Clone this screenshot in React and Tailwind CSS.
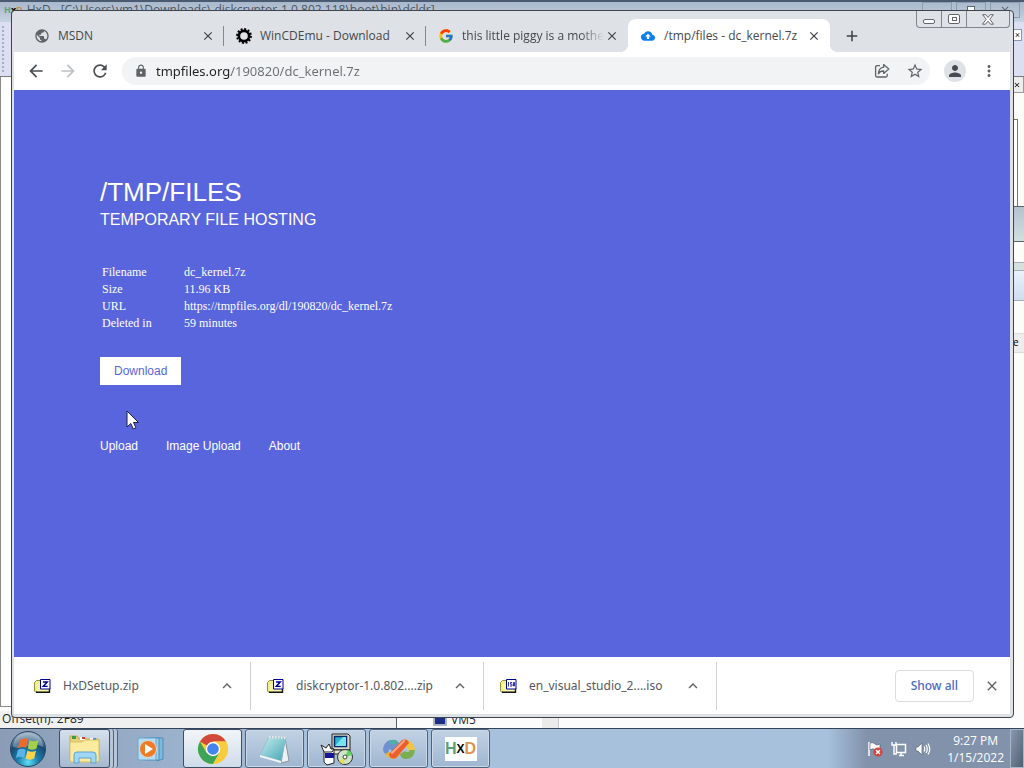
import React from "react";
import { FcGoogle } from "react-icons/fc";
import {
  MdAdd,
  MdArrowBack,
  MdArrowForward,
  MdClose,
  MdCloudUpload,
  MdKeyboardArrowUp,
  MdLock,
  MdMoreVert,
  MdPerson,
  MdPublic,
  MdRefresh,
  MdStarBorder,
} from "react-icons/md";

const GearIcon = () => (
  <svg viewBox="0 0 18 18" className="size-4 shrink-0" fill="none" stroke="#000">
    <circle cx="9" cy="9" r="5.8" strokeWidth="3" />
    <circle cx="9" cy="9" r="7.6" strokeWidth="2.6" strokeDasharray="2.2 1.78" />
  </svg>
);

const ShareIcon = () => (
  <svg viewBox="0 0 16 16" className="size-4" fill="none" stroke="#5f6368" strokeWidth="1.3" strokeLinejoin="round">
    <path d="M6 2.6H3.2Q1.6 2.6 1.6 4.2v8.2Q1.6 14 3.2 14h8.4q1.6 0 1.6-1.6v-1.6" />
    <path d="M9.6 1.6 14.8 6l-5.2 4.4V8Q6.2 7.8 4.4 10.8 4.8 4.8 9.6 4.2z" />
  </svg>
);

const ArchiveIcon = ({ mark }) => (
  <svg viewBox="0 0 17 16" className="w-[17px] h-4 shrink-0">
    <path d="M.5 4.5 2.5 2.500h4l1 1.500v10H1.500l-1-1z" fill="#f1f08a" stroke="#8f8f3c" />
    <path d="M3 6h12v8H3z" fill="#f6f6a8" />
    <path d="M2 14.3h13.500V10" fill="none" stroke="#111" strokeWidth="1.4" />
    <path d="M6.5 1.500h9.500v9.500H6.500z" fill="#fff" stroke="#000091" />
    {mark === "z" ? (
      <path d="M9 4h4.300L9.200 8.400h4.500" fill="none" stroke="#000091" strokeWidth="1.4" />
    ) : (
      <path d="M8.500 4v4.500M12.200 4.500h-1.700v1.700h1.500v1.800H10M13.500 4.500h1v3.500h-1z" fill="none" stroke="#000091" strokeWidth=".8" />
    )}
  </svg>
);

const Orb = () => (
  <svg viewBox="0 0 38 38" className="size-[38px]">
    <defs>
      <radialGradient id="orb" cx="50%" cy="88%" r="85%">
        <stop offset="0" stopColor="#5fe0f4" />
        <stop offset=".35" stopColor="#1b7fae" />
        <stop offset=".7" stopColor="#174a73" />
        <stop offset="1" stopColor="#8fa9bf" />
      </radialGradient>
    </defs>
    <circle cx="19" cy="19" r="17.5" fill="url(#orb)" stroke="#2c4661" />
    <path d="M4 17Q5 3 19 3t15 14q-7-4-15-1T4 17z" fill="#fff" opacity=".3" />
    <path d="M11 10q4-3 8-.5L17 18q-3.500-2-8 .3z" fill="#ee6a2c" />
    <path d="M20.500 10q4.500 2.500 9 0L27.500 18.500q-4.500 2.500-8.700 0z" fill="#a4cf4b" />
    <path d="M8.800 20q4.500-2.500 8 0L15 28q-3.500-2.300-8 0z" fill="#5cb3e8" />
    <path d="M18.500 20.500q4.500 2.500 8.600 0l-2 8q-4.300 2.300-8.500 0z" fill="#fbd34a" />
  </svg>
);

const FolderIcon = () => (
  <svg viewBox="0 0 34 32" className="w-[34px] h-8">
    <path d="M2 3h7l2 3h18q2 0 2 2v18H2z" fill="#e9cf78" stroke="#c6a64c" />
    <path d="M4 3h4v3H4z" fill="#3c9c3f" />
    <path d="M12 4h5v3h-5z" fill="#fff" />
    <path d="M14 4h3v2h-3z" fill="#d0422c" />
    <path d="M22 5h6v3h-6z" fill="#fff" />
    <path d="M25 5h3v2h-3z" fill="#3f8fd0" />
    <path d="M2 9h12l2-2h15v20q0 2-2 2H4q-2 0-2-2z" fill="#fbeb9f" stroke="#d8bf66" />
    <path d="M6 30V22q0-3 3-3h16q3 0 3 3v8h-5v-5H11v5z" fill="#9fd6f3" stroke="#5aa5d6" />
  </svg>
);

const MediaIcon = () => (
  <svg viewBox="0 0 28 26" className="w-7 h-[26px]">
    <path d="M12 2h14v21l-6 2z" fill="#7cb9dd" stroke="#4c8fb8" />
    <path d="M8 2h14v22H8z" fill="#9fd0ec" stroke="#4c8fb8" />
    <path d="M1 2h18v22H1z" fill="#b4dcf2" stroke="#6ba6ca" />
    <circle cx="11" cy="13" r="8.5" fill="#ee7b26" stroke="#d9d9d9" />
    <path d="M8 8v10l8-5z" fill="#fff" />
  </svg>
);

const ChromeIcon = () => (
  <svg viewBox="0 0 32 32" className="size-8">
    <circle cx="16" cy="16" r="15" fill="#f9cc3d" />
    <path d="M16 16 3 8.500A15 15 0 0 1 29 8.500H16z" fill="#d2483a" />
    <path d="M3 8.500A15 15 0 0 0 16 31l6.500-11.200-13 0z" fill="#3ba457" />
    <path d="M16 8.500h13A15 15 0 0 1 16 31l6.500-11.200z" fill="#f9cc3d" />
    <circle cx="16" cy="16" r="7.2" fill="#fff" />
    <circle cx="16" cy="16" r="5.8" fill="#4384ee" />
  </svg>
);

const NotepadIcon = () => (
  <svg viewBox="0 0 32 30" className="w-8 h-[30px]">
    <defs>
      <linearGradient id="pad" x1="0" y1="0" x2="1" y2="1">
        <stop offset="0" stopColor="#c9eef0" />
        <stop offset="1" stopColor="#43a5b4" />
      </linearGradient>
    </defs>
    <path d="m26 4 4 23-8 2z" fill="#eef1f3" stroke="#8794a0" />
    <path d="M10 3 27 4 22 27 1 21z" fill="url(#pad)" stroke="#8fb6bf" strokeWidth=".6" />
    <path d="m1 21 21 6v2L1 23z" fill="#f3f7f8" />
    <path d="m10 3 17 1" stroke="#e9e9e9" strokeWidth="2.5" strokeDasharray="1.5 1.5" />
  </svg>
);

const SetupIcon = () => (
  <svg viewBox="0 0 34 34" className="size-[34px]">
    <path d="M12 2h16l2 2v14H12z" fill="#d7d7cd" stroke="#222" />
    <path d="M14.500 4.500h12v10h-12z" fill="#2bb5d1" stroke="#062a66" strokeWidth="1.5" />
    <path d="m15 14 8-9h3v9z" fill="#7ce3ec" />
    <path d="M11 18h19v4H11z" fill="#e6e6dc" stroke="#222" />
    <path d="M4 17h10v14l-7 2-3-3z" fill="#fff" stroke="#222" />
    <path d="M5 21h9v5H5z" fill="#15159c" />
    <path d="m1 13 5 3 3-4 2 5h3l-2 3H4z" fill="#fff" stroke="#222" />
    <circle cx="25" cy="25" r="7.5" fill="#cfe3c7" stroke="#333" />
    <path d="m25 25 3-7q4 2 4 5z" fill="#5fd35c" />
    <path d="m25 25-6 4q2 3 5 3z" fill="#e5df5b" />
    <circle cx="25" cy="25" r="2" fill="#fff" stroke="#444" />
  </svg>
);

const ToolsIcon = () => (
  <svg viewBox="0 0 34 24" className="w-[34px] h-6">
    <path d="M1 12q1-7 7-9h6l5 5-7 7-5-3-1 7q-5-3-5-7z" fill="#6f90cf" />
    <path d="M7 4q5-3 9 1l-3 3q-3-2-6 0z" fill="#4fb0a8" />
    <path d="M3 17q3 5 10 5l6-5-4-4q-4 5-8 2z" fill="#e6b53a" />
    <path d="M20 4q8-3 12 5l1 4-6 2q-1-6-7-5z" fill="#efc544" />
    <path d="M18 17l5-3q3 3 5-1l5 0q-1 9-9 9-5 0-6-5z" fill="#7bae50" />
    <path d="m7 17 13-14q6-2 7 3L14 21q-6 2-7-4z" fill="#ec5f2c" />
    <path d="M10 16 22 4" stroke="#f9a884" strokeWidth="2" strokeLinecap="round" />
  </svg>
);

const HxdIcon = () => (
  <span className="flex h-6 w-8 items-center justify-center bg-white font-['Liberation_Sans'] text-base font-bold leading-6">
    <span className="text-[#5ba176]">H</span>
    <span className="text-xs leading-6 text-black">X</span>
    <span className="text-[#dc9350]">D</span>
  </span>
);

const tabs = [
  { title: "MSDN", icon: <MdPublic className="size-4 shrink-0 text-[#5f6368]" /> },
  { title: "WinCDEmu - Download", icon: <GearIcon /> },
  { title: "this little piggy is a mothe", icon: <FcGoogle className="size-4 shrink-0" />, fade: true },
  { title: "/tmp/files - dc_kernel.7z", icon: <MdCloudUpload className="size-[14px] mx-px shrink-0 text-[#0a7fe8]" />, active: true },
];

const downloads = [
  { name: "HxDSetup.zip", mark: "z" },
  { name: "diskcryptor-1.0.802....zip", mark: "z" },
  { name: "en_visual_studio_2....iso", mark: "iso" },
];

const details = [
  ["Filename", "dc_kernel.7z"],
  ["Size", "11.96 KB"],
  ["URL", "https://tmpfiles.org/dl/190820/dc_kernel.7z"],
  ["Deleted in", "59 minutes"],
];

const taskButtons = [
  { label: "Notepad", icon: <NotepadIcon /> },
  { label: "Setup", icon: <SetupIcon /> },
  { label: "Tools", icon: <ToolsIcon /> },
  { label: "HxD", icon: <HxdIcon /> },
];

const EditorWindow = () => (
  <div className="absolute inset-0 flex flex-col bg-[#fcfcfd]">
    <div className="flex h-[22px] items-start justify-between border-t-2 border-[#4a5a70] bg-linear-to-b from-[#a9b8cb] to-[#c5d3e2] pr-1">
      <div className="flex items-center gap-1 pl-1 text-xs leading-4 text-[#4c5563]">
        <span className="text-[9px] font-bold text-[#c98a3c]"><span className="text-[#5ba176]">H</span><span className="text-black">x</span>D</span>
        HxD - [C:\Users\vm1\Downloads\ diskcryptor-1.0.802.118\boot\bin\dcldr]
      </div>
      <div className="flex gap-1">
        <button aria-label="Minimize editor" className="h-4 w-[30px] border border-[#8e9cb2]" />
        <button aria-label="Restore editor" className="flex h-4 w-[30px] items-center justify-center border border-[#8e9cb2]">
          <span className="size-2 border border-[#59657a] bg-white" />
        </button>
        <button aria-label="Close editor" className="flex h-4 w-[30px] items-center justify-center border border-[#8e9cb2]">
          <MdClose className="size-3 text-[#59657a]" />
        </button>
      </div>
    </div>
    <div className="flex h-[54px] justify-between bg-[#dcdff1] px-[2px]">
      <div className="my-1 border-l-2 border-dotted border-[#a7adc4]" />
      <div className="mt-[7px] flex h-3 w-2 items-center border-y border-r border-[#8b96b0] bg-white"><MdClose className="size-2" /></div>
    </div>
    <div className="flex min-h-0 flex-1 justify-between border-t border-[#777]">
      <div className="mb-1 w-3 border-b border-l border-[#8a8a8a] bg-white" />
      <div className="flex w-[11px] flex-col bg-[#fdfcfa]">
        <div className="flex h-4 items-center border-b border-r border-[#9a9a9a] bg-[#ededed]"><MdClose className="size-2" /></div>
        <div className="mt-[26px] mr-[6px] h-[87px] border-r border-t border-[#77775f] bg-white" />
        <div className="h-9 border-y border-[#58666b] bg-linear-to-b from-[#b4c2ce] to-[#d2dfdf]" />
        <div className="h-5" />
        <div className="h-[9px] border-y border-[#a3afb4] bg-[#d6e0df]" />
        <div className="h-[30px] border-b border-[#a3afb4] bg-linear-to-b from-[#e9f3fc] to-[#d0dcf0]" />
        <div className="mt-8 h-5 border-y border-[#ddd] bg-[#eeeced] text-[10px] leading-4">e</div>
      </div>
    </div>
    <div className="flex h-[17px] text-xs leading-4 text-[#222]">
      <div className="flex w-[396px] bg-[#f0f0f0] pl-[2px]">Offset(h): 2F89</div>
      <div className="flex flex-1 items-center gap-1 border-l border-[#59606b] pl-9">
        <span className="h-3 w-[14px] border-2 border-[#aab4c2] bg-[#1c2d86]" />
        <span>VM5</span>
        <span className="ml-[62px] h-4 w-[17px] border-r border-[#c8ccd0] bg-[#ebebeb]" />
      </div>
    </div>
  </div>
);

const TabStrip = () => (
  <div className="relative flex h-[41px] items-end bg-[#dee1e6] pl-2">
    {tabs.map((tab, i) => (
      <div
        key={tab.title}
        className={
          tab.active
            ? "relative flex h-[33px] w-[202px] items-center gap-2 rounded-t-lg bg-white pr-2 pl-3 before:absolute before:bottom-0 before:-left-2 before:size-2 before:bg-[radial-gradient(circle_at_0_0,#dee1e6_8px,white_8px)] after:absolute after:bottom-0 after:-right-2 after:size-2 after:bg-[radial-gradient(circle_at_100%_0,#dee1e6_8px,white_8px)]"
            : "relative flex h-[33px] w-[202px] items-center gap-2 pr-2 pl-3"
        }
      >
        {tab.icon}
        <a
          href="#"
          className={
            tab.fade
              ? "min-w-0 flex-1 whitespace-nowrap text-xs leading-4 text-[#45494d] mask-[linear-gradient(90deg,black_84%,transparent)]"
              : "min-w-0 flex-1 whitespace-nowrap text-xs leading-4 text-[#45494d]"
          }
        >
          {tab.title}
        </a>
        <button aria-label={`Close ${tab.title}`} className="-ml-2 flex size-4 shrink-0 items-center justify-center">
          <MdClose className="size-[14px] stroke-[#3c4043] text-[#3c4043]" />
        </button>
        {i < 2 && <span className="absolute right-0 h-5 w-px bg-[#85888d]" />}
      </div>
    ))}
    <button aria-label="New tab" className="mb-[6px] ml-3 flex size-5 items-center justify-center">
      <MdAdd className="size-[18px] stroke-[#3c4043] text-[#3c4043]" />
    </button>
    <div className="absolute top-0 right-0 flex h-[17px] rounded-b-[4px] border border-t-0 border-[#80848b]">
      <button aria-label="Minimize" className="flex w-[25px] items-center justify-center border-r border-[#80848b]">
        <span className="mt-1 h-[5px] w-3 rounded-[2px] border border-[#62666c] bg-white" />
      </button>
      <button aria-label="Maximize" className="flex w-[25px] items-center justify-center border-r border-[#80848b]">
        <span className="flex h-[10px] w-3 items-center justify-center rounded-[2px] border border-[#62666c] bg-white">
          <span className="h-1 w-[5px] border border-[#62666c]" />
        </span>
      </button>
      <button aria-label="Close" className="flex w-[42px] items-center justify-center">
        <svg viewBox="0 0 12 11" className="h-[11px] w-3">
          <path d="M.7.7h3L6 3.500 8.300.7h3L7.800 5.300l3.700 4.900h-3L6 7.200l-2.500 3h-3l3.700-4.900z" fill="#fff" stroke="#62666c" />
        </svg>
      </button>
    </div>
  </div>
);

const Toolbar = () => (
  <div className="flex h-[38px] items-center gap-[14px] bg-white px-3 text-[#5f6368]">
    <button aria-label="Back"><MdArrowBack className="size-5 text-[#4a4d51]" /></button>
    <button aria-label="Forward" className="-ml-[2px]"><MdArrowForward className="size-5 text-[#bdc1c6]" /></button>
    <button aria-label="Reload" className="-mx-[2px]"><MdRefresh className="size-5 text-[#4a4d51]" /></button>
    <div className="flex h-7 flex-1 items-center rounded-full bg-[#f1f3f4] pr-[6px] pl-3">
      <MdLock className="size-[14px] shrink-0" />
      <input
        aria-label="Address"
        defaultValue="tmpfiles.org/190820/dc_kernel.7z"
        className="ml-2 min-w-0 flex-1 bg-[linear-gradient(90deg,#202124_75px,#6b6f74_75px)] bg-clip-text font-['Noto_Sans',sans-serif] text-[13px] leading-5 text-transparent outline-none"
      />
      <button aria-label="Share" className="mr-4"><ShareIcon /></button>
      <button aria-label="Bookmark"><MdStarBorder className="size-[18px]" /></button>
    </div>
    <button aria-label="Profile" className="flex size-[22px] items-center justify-center rounded-full bg-[#dee1e6]">
      <MdPerson className="size-[18px] text-[#474b50]" />
    </button>
    <button aria-label="Menu"><MdMoreVert className="size-[18px]" /></button>
  </div>
);

const FilePage = () => (
  <main className="min-h-0 flex-1 overflow-hidden bg-[#5865dc] pt-[86px] pl-[86px] font-['Liberation_Sans',sans-serif] text-white">
    <h1 className="text-[26px] leading-8">/TMP/FILES</h1>
    <h2 className="text-base leading-6">TEMPORARY FILE HOSTING</h2>
    <table className="mt-8 font-['Liberation_Serif',serif] text-xs leading-[17px]">
      <tbody>
        {details.map(([label, value]) => (
          <tr key={label}>
            <th scope="row" className="w-[82px] px-[2px] text-left font-normal">{label}</th>
            <td className="px-[2px]">{value}</td>
          </tr>
        ))}
      </tbody>
    </table>
    <button className="mt-[25px] block h-7 bg-white px-[14px] text-xs text-[#5865dc]">Download</button>
    <nav className="mt-[53px] flex gap-7 text-xs leading-4">
      <a href="#">Upload</a>
      <a href="#">Image Upload</a>
      <a href="#">About</a>
    </nav>
  </main>
);

const DownloadShelf = () => (
  <div className="flex h-[57px] items-center bg-white pr-[10px] pl-1 font-['Noto_Sans',sans-serif] text-[#5f6368]">
    {downloads.map((item) => (
      <div key={item.name} className="flex h-12 w-[233px] items-center border-r border-[#cfd1d4] pr-[14px] pl-4">
        <ArchiveIcon mark={item.mark} />
        <a href="#" className="ml-3 flex-1 text-xs leading-5 whitespace-nowrap text-[#55585c]">{item.name}</a>
        <button aria-label={`Options for ${item.name}`}><MdKeyboardArrowUp className="size-[18px]" /></button>
      </div>
    ))}
    <button className="ml-auto h-8 rounded-[4px] border border-[#dadce0] px-[15px] text-xs font-medium text-[#4a6bc4]">Show all</button>
    <button aria-label="Close downloads" className="ml-[10px]"><MdClose className="size-4 stroke-[#5f6368]" /></button>
  </div>
);

const Browser = () => (
  <div className="absolute top-[10px] right-[10px] bottom-[10px] left-[11px] flex flex-col rounded-[4px] border border-[#3f444c] bg-[#dee1e6] pr-[3px] pb-[3px] pl-[2px]">
    <TabStrip />
    <Toolbar />
    <FilePage />
    <DownloadShelf />
    <svg viewBox="0 0 14 21" className="absolute top-[399px] left-[114px] h-[21px] w-[14px]">
      <path d="M1 1v16l3.800-3.500L7.300 19l2.600-1.200-2.400-5.300H12.500z" fill="#fff" stroke="#1d1f3c" strokeLinejoin="round" />
    </svg>
  </div>
);

const Tray = () => (
  <div className="ml-auto flex items-center gap-2 bg-linear-to-r from-transparent to-[#8292ab] to-20% pl-10 text-white">
    <svg viewBox="0 0 16 16" className="size-4">
      <path d="M2 1v14" stroke="#fff" strokeWidth="1.5" />
      <path d="M3 2q3-1 5 1t5 0v6q-3 1-5-.5T3 9z" fill="#fff" stroke="#4f5b6d" strokeWidth=".6" />
      <circle cx="11" cy="11" r="4.5" fill="#d5403a" />
      <path d="m9 9 4 4m0-4-4 4" stroke="#fff" strokeWidth="1.5" />
    </svg>
    <svg viewBox="0 0 16 16" className="size-4" fill="none" stroke="#fff">
      <path d="M5.500 3.500h9v8h-9zM8 14.500h5M10 12v2" strokeWidth="1.5" />
      <path d="M1 1v3h4V1M3 4v9h3" strokeWidth="1.4" />
    </svg>
    <svg viewBox="0 0 16 16" className="size-4" fill="none" stroke="#fff">
      <path d="M1 6h2l4-4v12l-4-4H1z" fill="#fff" stroke="#59657a" strokeWidth=".7" />
      <path d="M9 5.500q1.500 2.500 0 5M11 4q2.500 4 0 8M13 2.500q3.500 5.500 0 11" strokeWidth="1.2" />
    </svg>
    <div className="mx-[2px] ml-2 text-center text-xs leading-[17px]">
      <div>9:27 PM</div>
      <div>1/15/2022</div>
    </div>
    <button aria-label="Show desktop" className="-ml-1 h-full w-[14px] border border-[#a9b5c5] bg-linear-to-br from-[#8a99ad] to-[#4f6075]" />
  </div>
);

const Taskbar = () => (
  <div className="flex h-10 border-t border-[#33435a] bg-linear-to-r from-[#8a9cb6] via-[#a7c1dc] via-30% to-[#a7c1dc]">
    <div className="flex gap-[3px]">
      <button aria-label="Start" className="flex w-[56px] items-center justify-center"><Orb /></button>
      <button aria-label="Explorer" className="flex w-[59px]">
        <span className="flex h-full w-[51px] items-center justify-center rounded-[3px] border border-[#3d4d63] bg-linear-to-b from-[#d6e0ec] to-[#a6b9d0]"><FolderIcon /></span>
        <span className="h-full w-1 rounded-r-[3px] border-r border-[#4f627b] bg-[#b6c5d8]" />
        <span className="h-full w-1 rounded-r-[3px] border-r border-[#4f627b] bg-[#b6c5d8]" />
      </button>
      <button aria-label="Media Player" className="flex w-[59px] items-center justify-center"><MediaIcon /></button>
      <button aria-label="Chrome" className="flex w-[59px] items-center justify-center rounded-[3px] border border-[#3d4d63] bg-linear-to-b from-[#f1f5f9] to-[#cfdcea]"><ChromeIcon /></button>
      {taskButtons.map((button) => (
        <button
          key={button.label}
          aria-label={button.label}
          className="flex w-[59px] items-center justify-center rounded-[3px] border border-[#4f627b] bg-linear-to-b from-[#c2d2e4] to-[#9fb6d1] shadow-[inset_0_0_0_1px_#cbd9e8]"
        >
          {button.icon}
        </button>
      ))}
    </div>
    <Tray />
  </div>
);

const App = () => (
  <div className="flex h-screen flex-col overflow-hidden font-['Open_Sans',sans-serif]">
    <div className="relative min-h-0 flex-1">
      <EditorWindow />
      <Browser />
    </div>
    <Taskbar />
  </div>
);

export default App;
